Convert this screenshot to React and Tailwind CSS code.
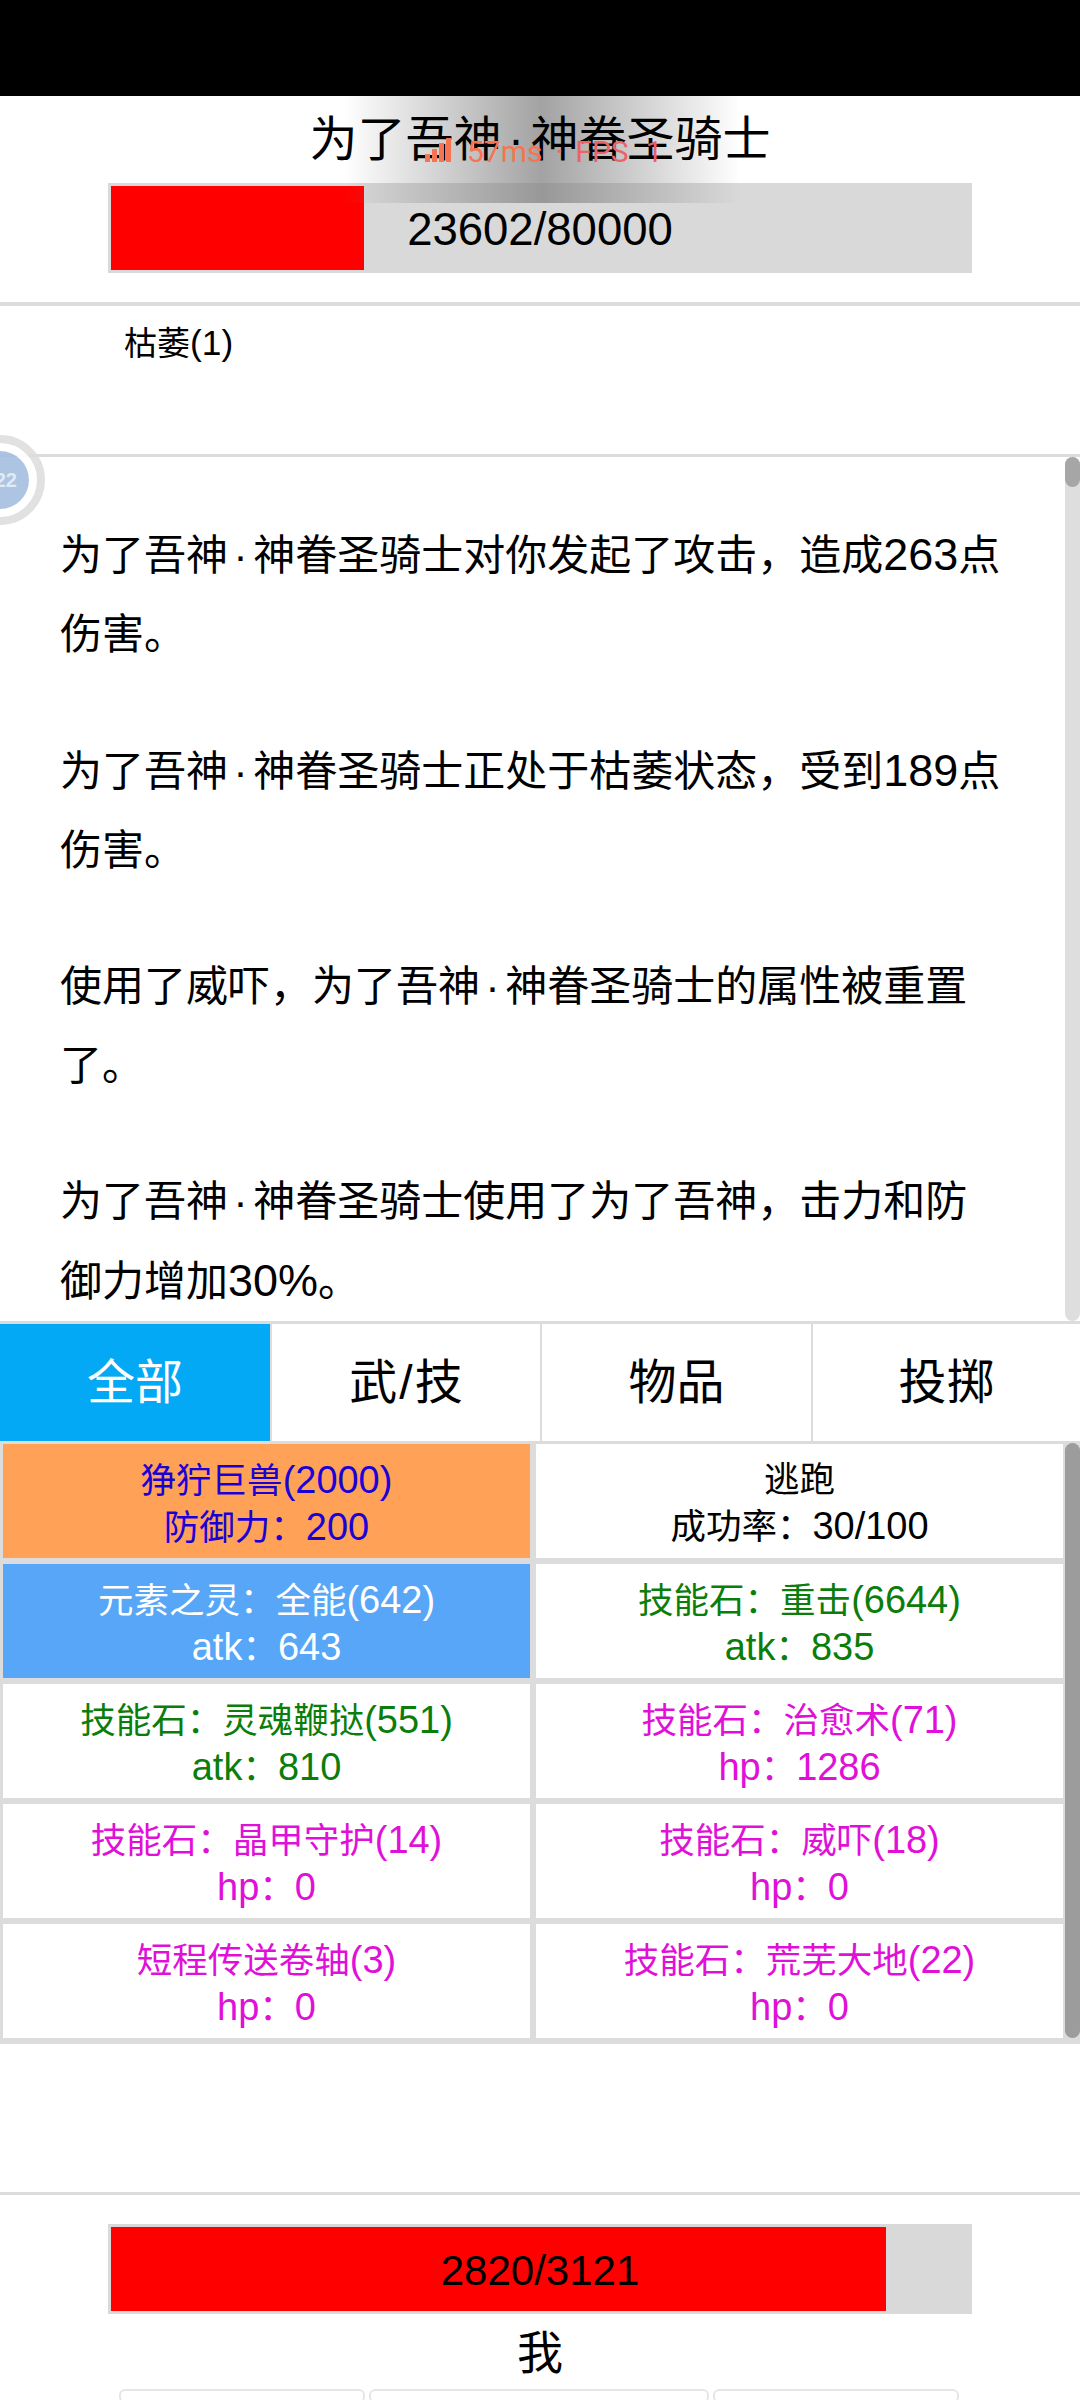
import React from "react";

const font = { fontFamily: '"Liberation Sans", "Noto Sans CJK SC", sans-serif' };

// latin runs sit a little larger than the cjk glyphs in the reference
function Mixed({ text }) {
  return text.split(/([\x20-\x7e]+)/).map((part, i) =>
    i % 2 === 1 ? (
      <span key={i} className="text-[1.07em]">{part}</span>
    ) : (
      part
    )
  );
}

function Dot() {
  return <span className="inline-block w-[0.6em] text-center">·</span>;
}

function BossName() {
  return (
    <>
      为了吾神
      <Dot />
      神眷圣骑士
    </>
  );
}

const logs = [
  <>
    <BossName />
    <Mixed text="对你发起了攻击，造成263点伤害。" />
  </>,
  <>
    <BossName />
    <Mixed text="正处于枯萎状态，受到189点伤害。" />
  </>,
  <>
    使用了威吓，为了吾神<Dot />神眷圣骑士的属性被重置了。
  </>,
  <>
    <BossName />
    <Mixed text="使用了为了吾神，击力和防御力增加30%。" />
  </>,
];

const tabs = [
  "全部",
  <>
    武<span className="mx-[2px]">/</span>技
  </>,
  "物品",
  "投掷",
];

const skills = [
  { name: "狰狞巨兽(2000)", sub: "防御力：200", cls: "bg-[#ffa257] text-[#1a00d6]" },
  { name: "逃跑", sub: "成功率：30/100", cls: "bg-white text-black" },
  { name: "元素之灵：全能(642)", sub: "atk：643", cls: "bg-[#58a6f7] text-white" },
  { name: "技能石：重击(6644)", sub: "atk：835", cls: "bg-white text-[#0a7d0a]" },
  { name: "技能石：灵魂鞭挞(551)", sub: "atk：810", cls: "bg-white text-[#0a7d0a]" },
  { name: "技能石：治愈术(71)", sub: "hp：1286", cls: "bg-white text-[#e010d8]" },
  { name: "技能石：晶甲守护(14)", sub: "hp：0", cls: "bg-white text-[#e010d8]" },
  { name: "技能石：威吓(18)", sub: "hp：0", cls: "bg-white text-[#e010d8]" },
  { name: "短程传送卷轴(3)", sub: "hp：0", cls: "bg-white text-[#e010d8]" },
  { name: "技能石：荒芜大地(22)", sub: "hp：0", cls: "bg-white text-[#e010d8]" },
];

function HpBar({ percent, label, labelClass }) {
  return (
    <div className="relative mx-auto h-[90px] w-[864px] bg-[#d9d9d9] py-[3px] pl-[3px]">
      <div className="h-[84px] bg-[#ff0000]" style={{ width: percent }} />
      <div className={`absolute inset-0 flex items-center justify-center text-black ${labelClass}`}>{label}</div>
    </div>
  );
}

export default function App() {
  return (
    <div className="relative h-[2400px] w-[1080px] overflow-hidden bg-white" style={font}>
      <div className="h-[96px] bg-black" />

      {/* boss */}
      <div className="h-[206px]">
        <div className="relative z-10 flex h-[87px] items-center justify-center text-[48px] leading-none text-black">
          <div><BossName /></div>
        </div>
        <HpBar percent="253px" label="23602/80000" labelClass="pt-[4px] text-[45.5px]" />
      </div>
      <div className="h-[4px] bg-[#dcdcdc]" />

      <div className="h-[148px] pl-[124px] pt-[16px] text-[33px] leading-[42px] text-black">
        <Mixed text="枯萎(1)" />
      </div>
      <div className="h-[3px] bg-[#dcdcdc]" />

      {/* log */}
      <div className="relative h-[864px] overflow-hidden pl-[60px] pr-[77px] pt-[58px]">
        {logs.map((l, i) => (
          <p key={i} className="mb-[57px] text-[42px] leading-[79px] text-black">{l}</p>
        ))}
        <div className="absolute bottom-0 right-0 top-0 w-[15px] rounded-full bg-[#dedede]" />
        <div className="absolute right-0 top-0 h-[30px] w-[15px] rounded-full bg-[#a6a6a6]" />
      </div>
      <div className="h-[3px] bg-[#dcdcdc]" />

      {/* tabs */}
      <div className="grid h-[117px] grid-cols-[272px_270px_271px_267px]">
        {tabs.map((t, i) => (
          <div
            key={i}
            className={`flex items-center justify-center text-[48px] ${i < 3 ? "border-r-[2px] border-[#dcdcdc]" : ""} ${i === 0 ? "bg-[#03a9f4] text-white" : "bg-white text-black"}`}
          >
            {t}
          </div>
        ))}
      </div>

      {/* skills */}
      <div className="relative h-[603px] bg-[#dcdcdc] pl-[3px] pt-[3px]">
        <div className="grid w-[1060px] grid-cols-2 gap-x-[6px] gap-y-[6px]">
          {skills.map((s) => (
            <div key={s.name} className={`flex h-[114px] flex-col items-center justify-center pt-[5px] text-[35.5px] leading-[46px] ${s.cls}`}>
              <div><Mixed text={s.name} /></div>
              <div><Mixed text={s.sub} /></div>
            </div>
          ))}
        </div>
        <div className="absolute right-0 top-[2px] h-[595px] w-[15px] rounded-full bg-[#9c9c9c]" />
      </div>

      <div className="h-[148px]" />
      <div className="h-[3px] bg-[#dcdcdc]" />

      {/* player */}
      <div className="pt-[29px]">
        <HpBar percent="775px" label="2820/3121" labelClass="pt-[2px] text-[42px]" />
        <div className="flex h-[75px] items-center justify-center pt-[4px] text-[46px] text-black">我</div>
        <div className="mx-auto flex w-[842px] gap-[4px]">
          <div className="h-[14px] w-[246px] rounded-[6px] border-[2px] border-[#e6e6e6]" />
          <div className="h-[14px] w-[340px] rounded-[6px] border-[2px] border-[#e6e6e6]" />
          <div className="h-[14px] w-[246px] rounded-[6px] border-[2px] border-[#e6e6e6]" />
        </div>
      </div>

      {/* floating overlays */}
      <div className="absolute left-[344px] top-[96px] h-[107px] w-[396px] bg-[linear-gradient(90deg,rgba(127,127,127,0)_0%,rgba(127,127,127,0.72)_50%,rgba(127,127,127,0)_100%)]" />
      <div className="absolute left-[425px] top-[138px] z-20 flex h-[24px] items-end text-[30px] leading-[20px] text-[#f8734f]" style={{ fontFamily: "Roboto, sans-serif" }}>
        <svg width="27" height="24" viewBox="0 0 27 24" fill="#f8734f">
          <rect x="0" y="16" width="5" height="8" />
          <rect x="7" y="11" width="5" height="13" />
          <rect x="14" y="5" width="5" height="19" />
          <rect x="21" y="0" width="5" height="24" />
        </svg>
        <span className="ml-[15px]">57ms</span>
        <span className="ml-[13px] text-[#ee6a5e]">·</span>
        <span className="ml-[12px] text-[#ea6365]">FPS</span>
        <span className="ml-[17px] text-[#e85f6c]">1</span>
      </div>

      <div className="absolute left-[-45px] top-[435px] flex h-[90px] w-[90px] items-center justify-center rounded-full border-[8px] border-[#dedede] bg-white opacity-90">
        <div className="flex h-[58px] w-[58px] items-center justify-end rounded-full bg-[#a5bfdf] pr-[12px] text-[20px] font-bold text-[#dfe8f2]">22</div>
      </div>
    </div>
  );
}
